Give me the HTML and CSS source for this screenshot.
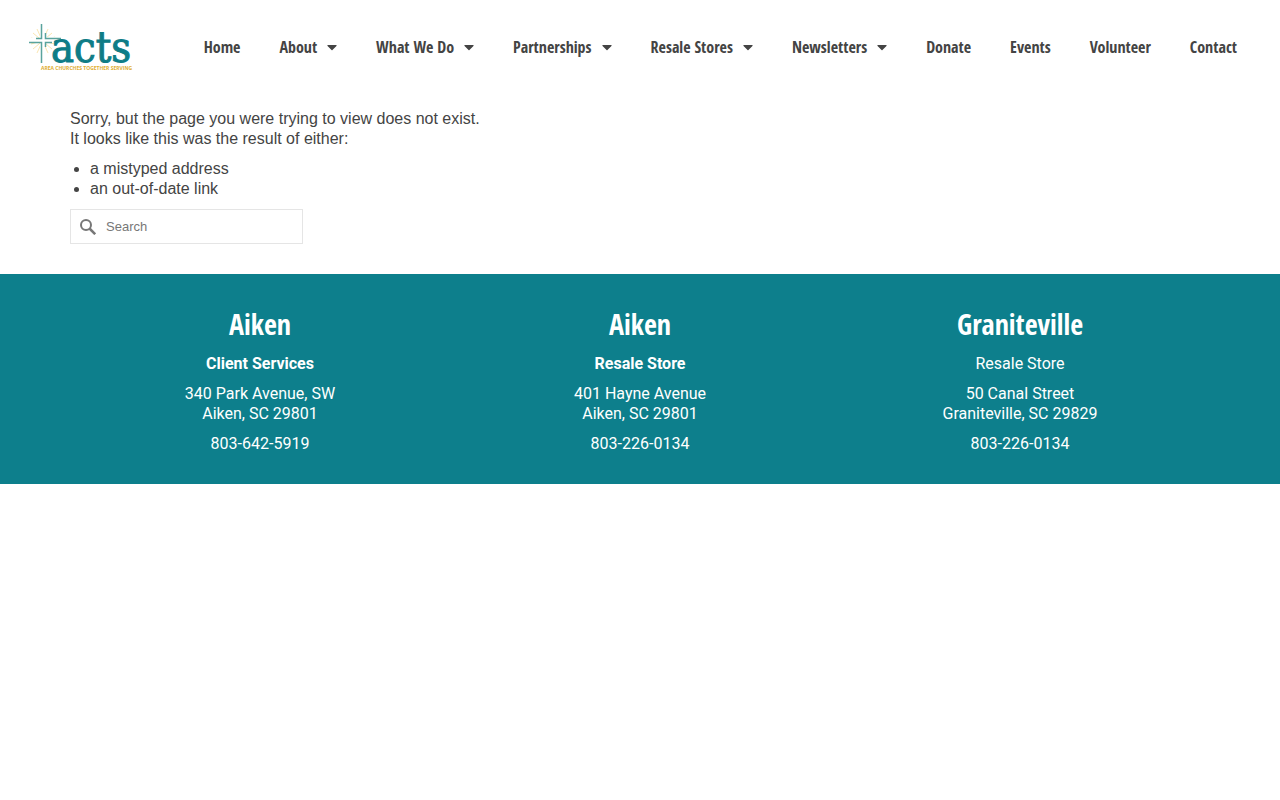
FILE: index.html
```html
<!DOCTYPE html>
<html lang="en">
<head>
<meta charset="utf-8">
<meta name="viewport" content="width=device-width, initial-scale=1">
<title>Page not found - ACTS</title>
<link rel="stylesheet" href="styles.css">
</head>
<body>
<svg width="0" height="0" class="sprite" aria-hidden="true">
    <symbol id="caret-down" viewBox="0 0 320 512">
        <path d="M31.300 192h257.300c17.800 0 26.700 21.500 14.100 34.100L174.100 354.800c-7.800 7.800-20.500 7.800-28.300 0L17.200 226.100C4.600 213.500 13.500 192 31.300 192z"/>
    </symbol>
</svg>
<header class="header">
    <a class="logo" href="#" aria-label="ACTS home">
        <svg width="108" height="50" viewBox="0 0 108 50">
            <g stroke="#fbe6b0" stroke-width="1">
                <path d="M5 11L24 27M24 11L5 27M9 7L20 31M20 7L9 31M3 16L27 22M3 22L27 15"/>
            </g>
            <path d="M12 2h5v13h15v6H17v20h-5V21H1v-5h11z" fill="#fff"/>
            <g fill="none" stroke="#5aa39d" stroke-width="1.500">
                <path d="M13.500 2V16.500H8M17.500 11V16.500H33M1 20.500H13.500V41M17.500 25V20.500H24"/>
            </g>
            <text class="logo-name" x="23" y="40">acts</text>
            <text class="logo-tag" x="13" y="48">AREA CHURCHES TOGETHER SERVING</text>
        </svg>
    </a>
    <nav aria-label="Main">
        <ul class="menu">
            <li><a href="#">Home</a></li>
            <li><a href="#">About <svg class="caret"><use href="#caret-down"/></svg></a></li>
            <li><a href="#">What We Do <svg class="caret"><use href="#caret-down"/></svg></a></li>
            <li><a href="#">Partnerships <svg class="caret"><use href="#caret-down"/></svg></a></li>
            <li><a href="#">Resale Stores <svg class="caret"><use href="#caret-down"/></svg></a></li>
            <li><a href="#">Newsletters <svg class="caret"><use href="#caret-down"/></svg></a></li>
            <li><a href="#">Donate</a></li>
            <li><a href="#">Events</a></li>
            <li><a href="#">Volunteer</a></li>
            <li><a href="#">Contact</a></li>
        </ul>
    </nav>
</header>

<main class="container content">
    <p>Sorry, but the page you were trying to view does not exist.<br>It looks like this was the result of either:</p>
    <ul class="reasons">
        <li>a mistyped address</li>
        <li>an out-of-date link</li>
    </ul>
    <form class="search" role="search">
        <button type="submit" aria-label="Submit search">
            <svg width="16" height="16" viewBox="0 0 16 16" fill="none" stroke="#777">
                <circle cx="6" cy="6" r="5" stroke-width="2"/>
                <path d="M9.500 9.500L15.200 15.200" stroke-width="2.500"/>
            </svg>
        </button>
        <input type="search" placeholder="Search" aria-label="Search">
    </form>
</main>

<footer class="footer">
    <div class="container columns">
        <div class="column">
            <h2>Aiken</h2>
            <p><strong>Client Services</strong></p>
            <p>340 Park Avenue, SW<br>Aiken, SC 29801</p>
            <p>803-642-5919</p>
        </div>
        <div class="column">
            <h2>Aiken</h2>
            <p><strong>Resale Store</strong></p>
            <p>401 Hayne Avenue<br>Aiken, SC 29801</p>
            <p>803-226-0134</p>
        </div>
        <div class="column">
            <h2>Graniteville</h2>
            <p>Resale Store</p>
            <p>50 Canal Street<br>Graniteville, SC 29829</p>
            <p>803-226-0134</p>
        </div>
    </div>
</footer>
</body>
</html>
```
FILE: styles.css
```css
* {
    box-sizing: border-box;
}
body {
    margin: 0;
    background: #fff;
    color: #444;
    font: 16px/20px "Liberation Sans", Arial, sans-serif;
}
p {
    margin: 0 0 10px;
}
.container {
    max-width: 1170px;
    margin: 0 auto;
    padding: 0 15px;
}
.sprite {
    display: block;
}

/* header */
.header {
    display: flex;
    align-items: center;
    justify-content: space-between;
    padding: 22px 43px 22px 28px;
}
.logo svg {
    display: block;
}
.logo-name {
    font: 43px "DejaVu Serif Condensed", "DejaVu Serif", serif;
    fill: #0e7c86;
    stroke: #0e7c86;
    stroke-width: 1px;
}
.logo-tag {
    font: bold 5px "Open Sans", sans-serif;
    fill: #e0ad2f;
}
.menu {
    display: flex;
    flex-wrap: wrap;
    gap: 0 39px;
    margin: 0;
    padding: 0;
    list-style: none;
}
.menu a {
    display: flex;
    align-items: center;
    gap: 10px;
    padding: 13px 0;
    color: #444;
    font: bold 16px/24px "Open Sans Condensed", "Roboto Condensed", "Liberation Sans Narrow", sans-serif;
    text-decoration: none;
}
.caret {
    width: 10px;
    height: 16px;
    fill: #444;
}

/* page */
.content {
    padding-top: 15px;
    padding-bottom: 30px;
}
.reasons {
    margin: 0 0 10px;
    padding-left: 20px;
}
.search {
    display: flex;
    align-items: center;
    width: 233px;
    height: 35px;
    border: 1px solid #e5e5e5;
}
.search button {
    display: flex;
    padding: 0 10px 0 9px;
    border: 0;
    background: none;
}
.search input {
    flex: 1;
    min-width: 0;
    padding: 0;
    border: 0;
    background: none;
    font: 13px/20px "Liberation Sans", Arial, sans-serif;
}
.search input::placeholder {
    color: #777;
}

/* footer */
.footer {
    padding: 30px 0 20px;
    background: #0d7f8c;
    color: #fff;
    font-family: Roboto, sans-serif;
}
.columns {
    display: grid;
    grid-template-columns: repeat(3, 1fr);
}
.column {
    text-align: center;
}
.column h2 {
    margin: 0 0 10px;
    font: bold 28px/40px "Open Sans Condensed", "Roboto Condensed", "Liberation Sans Narrow", sans-serif;
}
```
